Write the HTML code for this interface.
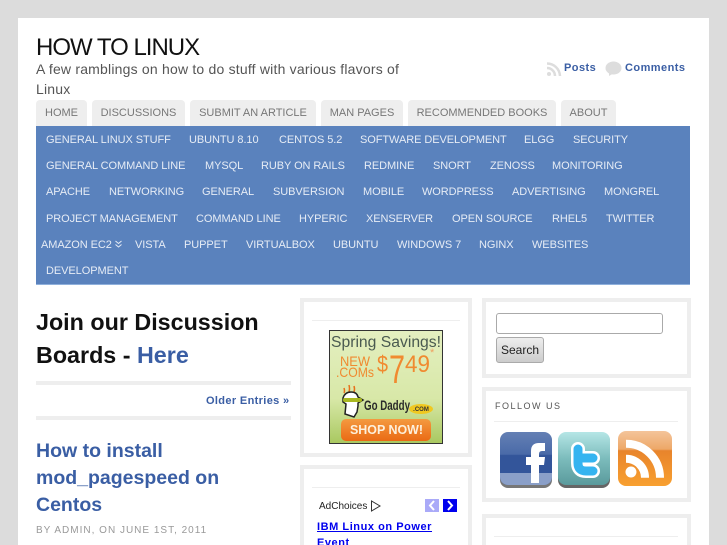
<!DOCTYPE html>
<html><head><meta charset="utf-8"><title>How to Linux</title>
<style>
html,body{margin:0;padding:0;width:727px;height:545px;overflow:hidden}
body{background:#dcdcdc;font-family:"Liberation Sans",sans-serif}
#root{position:absolute;left:0;top:0;width:727px;height:545px;overflow:hidden;background:#dcdcdc}
#w{position:absolute;left:18px;top:18px;width:691px;height:527px;background:#fff}
.a{position:absolute;white-space:nowrap}
a{text-decoration:none;color:#3a5ea4}
.tab{position:absolute;top:100px;height:26px;line-height:27px;background:#eee;border-radius:4px 4px 0 0;color:#777;font-size:11px;text-align:center;white-space:nowrap}
#nav{position:absolute;left:36px;top:126px;width:654px;height:159px;background:#5a82bd;border-bottom:1px solid #8fb0dc;box-sizing:border-box}
#nav span{position:absolute;color:#e6ecf5;font-size:11px;line-height:14px;white-space:nowrap;letter-spacing:-.07px;margin-top:1px}
.box{position:absolute;border:4px solid #eee;box-sizing:border-box;background:#fff}
.hr{position:absolute;height:1px;background:#eee}
.m{font-size:11px;line-height:14px;font-weight:bold;letter-spacing:.45px}
</style></head><body><div id="root">
<div id="w"></div>
<div class="a" style="left:36px;top:33px;font-size:24px;line-height:30px;color:#111;letter-spacing:-1px">HOW TO LINUX</div>
<div class="a" style="left:36px;top:59px;font-size:14px;line-height:20px;color:#555;width:380px;white-space:normal;letter-spacing:.2px">A few ramblings on how to do stuff with various flavors of Linux</div>

<svg class="a" style="left:546px;top:61px" width="16" height="16" viewBox="0 0 16 16"><circle cx="3" cy="13" r="2" fill="#ddd"/><path d="M1 7a8 8 0 0 1 8 8M1 2.500a13 13 0 0 1 13 12.500" fill="none" stroke="#ddd" stroke-width="2.500"/></svg>
<a class="a m" style="left:564px;top:61px">Posts</a>
<svg class="a" style="left:605px;top:61px" width="17" height="15" viewBox="0 0 17 15"><ellipse cx="8.500" cy="7" rx="8" ry="6.500" fill="#ddd"/><path d="M4 11l0 4 5-3z" fill="#ddd"/></svg>
<a class="a m" style="left:625px;top:61px">Comments</a>

<div class="tab" style="left:36px;width:51px">HOME</div>
<div class="tab" style="left:92px;width:93px">DISCUSSIONS</div>
<div class="tab" style="left:190px;width:126px">SUBMIT AN ARTICLE</div>
<div class="tab" style="left:321px;width:82px">MAN PAGES</div>
<div class="tab" style="left:408px;width:148px">RECOMMENDED BOOKS</div>
<div class="tab" style="left:561px;width:55px">ABOUT</div>

<div id="nav">
<span style="left:10px;top:6px">GENERAL LINUX STUFF</span><span style="left:153px;top:6px">UBUNTU 8.10</span><span style="left:243px;top:6px">CENTOS 5.2</span><span style="left:324px;top:6px">SOFTWARE DEVELOPMENT</span><span style="left:488px;top:6px">ELGG</span><span style="left:537px;top:6px">SECURITY</span>
<span style="left:10px;top:32px">GENERAL COMMAND LINE</span><span style="left:169px;top:32px">MYSQL</span><span style="left:225px;top:32px">RUBY ON RAILS</span><span style="left:328px;top:32px">REDMINE</span><span style="left:397px;top:32px">SNORT</span><span style="left:454px;top:32px">ZENOSS</span><span style="left:516px;top:32px">MONITORING</span>
<span style="left:10px;top:58px">APACHE</span><span style="left:73px;top:58px">NETWORKING</span><span style="left:166px;top:58px">GENERAL</span><span style="left:237px;top:58px">SUBVERSION</span><span style="left:327px;top:58px">MOBILE</span><span style="left:386px;top:58px">WORDPRESS</span><span style="left:476px;top:58px">ADVERTISING</span><span style="left:568px;top:58px">MONGREL</span>
<span style="left:10px;top:85px">PROJECT MANAGEMENT</span><span style="left:160px;top:85px">COMMAND LINE</span><span style="left:263px;top:85px">HYPERIC</span><span style="left:330px;top:85px">XENSERVER</span><span style="left:416px;top:85px">OPEN SOURCE</span><span style="left:516px;top:85px">RHEL5</span><span style="left:570px;top:85px">TWITTER</span>
<span style="left:5px;top:111px">AMAZON EC2</span><span style="left:99px;top:111px">VISTA</span><span style="left:148px;top:111px">PUPPET</span><span style="left:210px;top:111px">VIRTUALBOX</span><span style="left:297px;top:111px">UBUNTU</span><span style="left:361px;top:111px">WINDOWS 7</span><span style="left:443px;top:111px">NGINX</span><span style="left:496px;top:111px">WEBSITES</span>
<span style="left:10px;top:137px">DEVELOPMENT</span>
</div>
<svg class="a" style="left:115px;top:240px" width="7" height="8" viewBox="0 0 7 8"><path d="M.5 1l3 2.500 3-2.500M.5 4.500l3 2.500 3-2.500" fill="none" stroke="#e6ecf5" stroke-width="1"/></svg>

<div class="a" style="left:36px;top:306px;width:254px;font-size:23.300px;line-height:33px;font-weight:bold;color:#111;white-space:normal">Join our Discussion Boards - <a style="color:#3a5ea4">Here</a></div>
<div class="a" style="left:36px;top:381px;width:255px;height:4px;background:#eee"></div>
<a class="a m" style="left:206px;top:394px;line-height:15px;letter-spacing:.35px">Older Entries »</a>
<div class="a" style="left:36px;top:416px;width:255px;height:4px;background:#eee"></div>
<div class="a" style="left:36px;top:438px;width:240px;font-size:19.500px;line-height:27px;font-weight:bold;color:#3a5ea4;white-space:normal">How to install mod_pagespeed on Centos</div>
<div class="a" style="left:36px;top:524px;font-size:10px;line-height:14px;color:#999;letter-spacing:1px">BY ADMIN, ON JUNE 1ST, 2011</div>

<div class="box" style="left:300px;top:298px;width:172px;height:159px"></div>
<div class="hr" style="left:312px;top:320px;width:148px"></div>
<svg class="a" style="left:329px;top:330px" width="114" height="114" viewBox="0 0 114 114">
<defs><linearGradient id="g" x1="0" y1="0" x2="0" y2="1"><stop offset="0" stop-color="#e4efc0"/><stop offset=".6" stop-color="#d8e8a8"/><stop offset="1" stop-color="#a9c860"/></linearGradient><linearGradient id="o" x1="0" y1="0" x2="0" y2="1"><stop offset="0" stop-color="#f49a40"/><stop offset="1" stop-color="#ea6a14"/></linearGradient></defs>
<rect x=".5" y=".5" width="113" height="113" fill="url(#g)" stroke="#333"/>
<text x="2" y="17" font-family="Liberation Sans" font-size="15.500" textLength="110" lengthAdjust="spacingAndGlyphs" fill="#4a5a50">Spring Savings!</text>
<text x="11" y="36" font-family="Liberation Sans" font-size="14" textLength="30" lengthAdjust="spacingAndGlyphs" fill="#f08a30">NEW</text>
<text x="7" y="47" font-family="Liberation Sans" font-size="14" textLength="38" lengthAdjust="spacingAndGlyphs" fill="#f08a30">.COMs</text>
<text x="48" y="42" font-family="Liberation Sans" font-size="23" textLength="11" lengthAdjust="spacingAndGlyphs" fill="#f08a30">$</text>
<text x="60" y="53" font-family="Liberation Sans" font-size="40" textLength="16" lengthAdjust="spacingAndGlyphs" fill="#f08a30">7</text>
<text x="76" y="42" font-family="Liberation Sans" font-size="24" textLength="25" lengthAdjust="spacingAndGlyphs" fill="#f08a30">49</text>
<text x="101" y="26" font-family="Liberation Sans" font-size="11" fill="#f0a060">*</text>
<path d="M15 58q1 3 0 5M20 55q1 4 0 7M25 56q1 3 0 6" fill="none" stroke="#e8701a" stroke-width="1.500"/>
<path d="M14 68q2-6 8-6t7 5l5 3-5 3v3l-1 6-3 5-9-3 1-10-3-2z" fill="#fff" stroke="#222" stroke-width="1.500"/><rect x="14" y="68" width="19" height="4" rx="2" fill="#a8b820"/>
<text x="35" y="80" font-family="Liberation Sans" font-size="14" font-weight="bold" fill="#2a2a2a" textLength="46" lengthAdjust="spacingAndGlyphs">Go Daddy</text>
<ellipse cx="92" cy="79" rx="12" ry="5" fill="#f0c820"/><text x="92" y="81" font-family="Liberation Sans" font-size="6" font-weight="bold" text-anchor="middle" fill="#333">.COM</text>
<rect x="12" y="89" width="90" height="22" rx="5" fill="url(#o)"/>
<text x="21" y="104" font-family="Liberation Sans" font-size="13" font-weight="bold" textLength="73" lengthAdjust="spacingAndGlyphs" fill="#fdf0dc">SHOP NOW!</text>
</svg>

<div class="box" style="left:300px;top:465px;width:172px;height:80px;border-bottom:0"></div>
<div class="hr" style="left:312px;top:487px;width:148px"></div>
<div class="a" style="left:319px;top:500px;font-size:10px;line-height:13px;color:#222">AdChoices</div>
<svg class="a" style="left:370px;top:500px" width="11" height="12" viewBox="0 0 11 12"><path d="M1.500 1v10L10 6z" fill="none" stroke="#333"/></svg>
<div class="a" style="left:425px;top:499px;width:14px;height:13px;background:#aaaaf8"></div>
<svg class="a" style="left:425px;top:499px" width="14" height="13"><path d="M9 2L5 6.500 9 11" fill="none" stroke="#fff" stroke-width="2"/></svg>
<div class="a" style="left:443px;top:499px;width:14px;height:13px;background:#00e"></div>
<svg class="a" style="left:443px;top:499px" width="14" height="13"><path d="M5 2l4 4.500L5 11" fill="none" stroke="#fff" stroke-width="2"/></svg>
<a class="a m" style="left:317px;top:520px;letter-spacing:.55px;color:#00e;text-decoration:underline">IBM Linux on Power</a>
<a class="a m" style="left:317px;top:536px;height:9px;overflow:hidden;letter-spacing:.55px;color:#00e;text-decoration:underline">Event</a>

<div class="box" style="left:482px;top:298px;width:209px;height:80px"></div>
<div class="a" style="left:496px;top:313px;width:167px;height:21px;box-sizing:border-box;border:1px solid #aaa;border-radius:3px;background:#fff"></div>
<div class="a" style="left:496px;top:337px;width:48px;height:26px;box-sizing:border-box;border:1px solid #aaa;border-radius:3px;background:linear-gradient(#eee,#ccc);font-size:12px;line-height:25px;text-align:center;color:#222">Search</div>

<div class="box" style="left:482px;top:387px;width:209px;height:115px"></div>
<div class="a" style="left:495px;top:400px;font-size:9px;line-height:12px;letter-spacing:1.500px;color:#555">FOLLOW US</div>
<div class="hr" style="left:494px;top:421px;width:184px"></div>
<svg class="a" style="left:498px;top:430px" width="176" height="60" viewBox="0 0 176 60">
<defs>
<linearGradient id="f" x1="0" y1="0" x2="0" y2="1"><stop offset="0" stop-color="#6480b4"/><stop offset=".42" stop-color="#4a6aa8"/><stop offset=".44" stop-color="#33559a"/><stop offset="1" stop-color="#33559a"/></linearGradient>
<linearGradient id="t" x1="0" y1="0" x2="0" y2="1"><stop offset="0" stop-color="#b5e6e6"/><stop offset=".5" stop-color="#7cbcbc"/><stop offset="1" stop-color="#5a9a9c"/></linearGradient>
<linearGradient id="r" x1="0" y1="0" x2="0" y2="1"><stop offset="0" stop-color="#f4c49a"/><stop offset=".33" stop-color="#eda868"/><stop offset=".36" stop-color="#e8842c"/><stop offset="1" stop-color="#f8a030"/></linearGradient>
</defs>
<rect x="2" y="3" width="52" height="55" rx="8" fill="#777"/>
<rect x="2" y="2" width="52" height="53" rx="8" fill="url(#f)"/>
<path d="M2 43h52v4a8 8 0 0 1-8 8H10a8 8 0 0 1-8-8z" fill="#8a9fc8"/>
<path d="M33 53V35h-5v-8h5v-6q0-8 8-8h6v8h-3q-3 0-3 3v3h6l-1 8h-5v18z" fill="#fff"/>
<rect x="60" y="3" width="52" height="55" rx="8" fill="#666"/>
<rect x="60" y="2" width="52" height="53" rx="8" fill="url(#t)"/>
<path d="M80 19V33Q80 41 88 41H95M80 28H95" fill="none" stroke="#fff" stroke-width="14" stroke-linecap="round"/>
<path d="M80 19V33Q80 41 88 41H95M80 28H95" fill="none" stroke="#35b4f0" stroke-width="9" stroke-linecap="round"/>
<rect x="120" y="1" width="54" height="55" rx="8" fill="url(#r)"/>
<circle cx="133" cy="42" r="5.500" fill="#fff"/>
<path d="M128 13.700A34 34 0 0 1 162 47.700M128 28.700A19 19 0 0 1 147 47.700" fill="none" stroke="#fff" stroke-width="8"/>
</svg>

<div class="box" style="left:482px;top:514px;width:209px;height:31px;border-bottom:0"></div>
<div class="hr" style="left:494px;top:536px;width:184px"></div>
</div></body></html>
